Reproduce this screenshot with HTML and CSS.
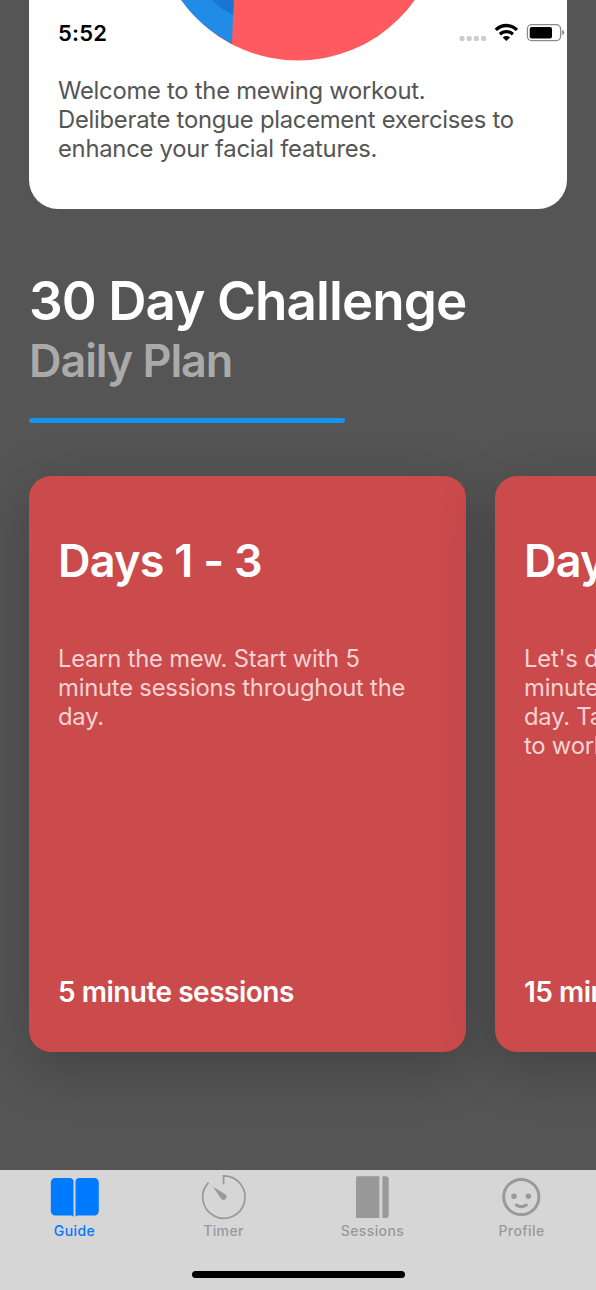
FILE: index.html
```html
<!DOCTYPE html>
<html lang="en">
<head>
<meta charset="utf-8">
<meta name="viewport" content="width=device-width">
<title>Guide</title>
<link rel="stylesheet" href="styles.css">
</head>
<body>
<div class="app">
  <header class="status">
    <span class="clock">5:52</span>
    <svg class="indicators" width="108" height="22" viewBox="0 0 108 22">
      <g fill="#ccc"><rect x="1.500" y="14" width="5" height="5" rx="1.700"/><rect x="8.700" y="14" width="5" height="5" rx="1.700"/><rect x="15.900" y="14" width="5" height="5" rx="1.700"/><rect x="23.100" y="14" width="5" height="5" rx="1.700"/></g>
      <g fill="none" stroke="#000" stroke-width="3.300"><path d="M37.800 7.900a15 15 0 0 1 21.200 0"/><path d="M41.900 12.200a9.300 9.300 0 0 1 13 0"/></g>
      <path d="M44.700 15.500a5.400 5.400 0 0 1 7.400 0L48.400 19z"/>
      <rect x="69.400" y="2.600" width="33.200" height="16" rx="4.300" fill="none" stroke="#8b8b8b" stroke-width="1.300"/>
      <rect x="71.700" y="4.900" width="22.300" height="11.500" rx="2"/>
      <path d="M104.300 8.100c2.400.7 2.400 4.300 0 5z" fill="#777"/>
    </svg>
  </header>
  <main class="content">
    <section class="intro">
      <svg class="art" width="288" height="62" viewBox="0 0 288 62">
        <circle cx="144" cy="-82.500" r="143" fill="#ff5a60"/>
        <path d="M27.200 0C41 19 58 33.500 78 44L79.700 0z" fill="#208ce8"/>
        <path d="M58 0Q67 9.500 79.200 15L79.700 0z" fill="#1776d2"/>
      </svg>
      <p class="copy intro-copy">Welcome to the mewing workout.<br>Deliberate tongue placement exercises to<br>enhance your facial features.</p>
    </section>
    <section class="heading">
      <h1 class="title">30 Day Challenge</h1>
      <h2 class="subtitle">Daily Plan</h2>
      <div class="rule"></div>
    </section>
    <section class="plans">
      <article class="plan">
        <h3 class="days">Days 1 - 3</h3>
        <p class="copy plan-copy">Learn the mew. Start with 5<br>minute sessions throughout the<br>day.</p>
        <p class="length">5 minute sessions</p>
      </article>
      <article class="plan">
        <h3 class="days">Days 4 - 6</h3>
        <p class="copy plan-copy">Let's do more. Start with 15<br>minute sessions throughout the<br>day. Take breaks if you need<br>to work up to it.</p>
        <p class="length">15 minute sessions</p>
      </article>
    </section>
  </main>
  <nav class="tabs">
    <a class="tab active">
      <svg class="icon" width="60" height="46" viewBox="0 0 60 46"><path fill="currentColor" d="M10.300 7H24.500a4 4 0 0 1 4 3V46q-.5-1.500-2-1.500H10.300a4.500 4.500 0 0 1-4.500-4.500V11.500A4.500 4.500 0 0 1 10.300 7zM34.500 7H49.300a4.500 4.500 0 0 1 4.500 4.500V40a4.500 4.500 0 0 1-4.500 4.500H32.500q-1.500 0-2 1.500V10a4 4 0 0 1 4-3z"/></svg>
      <span class="label">Guide</span>
    </a>
    <a class="tab">
      <svg class="icon" width="60" height="46" viewBox="0 0 60 46"><path fill="none" stroke="currentColor" stroke-width="1.700" d="M29.600 13.500V4.900a21.200 21.200 0 1 1-15.200 6.700"/><path fill="currentColor" d="M19 15.800L31.600 23.600a3 3 0 1 1-4.300 4.300z"/></svg>
      <span class="label">Timer</span>
    </a>
    <a class="tab">
      <svg class="icon" width="60" height="46" viewBox="0 0 60 46"><path fill="currentColor" d="M14.500 5.200H36.400V47H14.500a1.500 1.500 0 0 1-1.500-1.500V6.700A1.500 1.500 0 0 1 14.500 5.200zM39.400 5.200H42.700a3 3 0 0 1 3 3V44a3 3 0 0 1-3 3H39.400z"/></svg>
      <span class="label">Sessions</span>
    </a>
    <a class="tab">
      <svg class="icon" width="60" height="46" viewBox="0 0 60 46"><g fill="none" stroke="currentColor" stroke-width="3"><circle cx="29.300" cy="26" r="17.600"/><path stroke-linecap="round" d="M24.300 34q5 3.300 10 0"/></g><circle cx="22" cy="25.300" r="2.700" fill="currentColor"/><circle cx="36.400" cy="25.300" r="2.700" fill="currentColor"/></svg>
      <span class="label">Profile</span>
    </a>
    <div class="home"></div>
  </nav>
</div>
</body>
</html>
```
FILE: styles.css
```css
* { box-sizing: border-box; }
body, h1, h2, h3, p { margin: 0; }
body { background: #555; font-family: Inter, "Liberation Sans", sans-serif; }
.app { position: relative; display: flex; flex-direction: column; width: 596px; height: 1290px; overflow: hidden; background: #555; }
.status { position: absolute; top: 22px; left: 58px; right: 30px; display: flex; justify-content: space-between; z-index: 2; }
.clock { font-size: 22px; line-height: 22px; font-weight: 600; letter-spacing: .2px; color: #000; }
.content { flex: 1; min-height: 0; }
.intro { height: 209px; margin: 0 29px; background: #fff; border-radius: 0 0 29px 29px; }
.art { display: block; margin: 0 auto; }
.copy { font-size: 23.8px; line-height: 29.1px; letter-spacing: -.26px; white-space: nowrap; }
.intro-copy { padding: 14px 29px 0; color: #555; }
.heading { padding: 63px 29px 0; }
.title { font-size: 53px; line-height: 58px; font-weight: 600; letter-spacing: -.93px; color: #fff; white-space: nowrap; }
.subtitle { margin-top: 1px; font-size: 45px; line-height: 60px; font-weight: 600; letter-spacing: -1.1px; color: #aaa; }
.rule { width: 316px; height: 5px; margin-top: 27px; border-radius: 3px; background: #1494ee; }
.plans { display: flex; gap: 29px; margin-top: 53px; padding-left: 29px; }
.plan { flex: 0 0 437px; display: flex; flex-direction: column; height: 576px; padding: 56px 29px 44px; border-radius: 22px; background: #cb4a4c; box-shadow: 0 14px 56px rgba(0, 0, 0, .24); }
.days { font-size: 45px; line-height: 57px; font-weight: 600; letter-spacing: -.75px; color: #fff; }
.plan-copy { margin-top: 55px; letter-spacing: -.22px; color: #f5d3d3; }
.length { margin-top: auto; font-size: 28px; line-height: 32px; font-weight: 600; letter-spacing: -.5px; color: #fff; white-space: nowrap; }
.tabs { position: relative; z-index: 1; display: grid; grid-template-columns: repeat(4, 149px); height: 120px; padding-top: 1px; background: #d6d6d6; }
.tab { display: flex; flex-direction: column; align-items: center; color: #999; }
.tab.active { color: #007aff; }
.icon { overflow: visible; }
.label { margin-top: 5px; font-size: 14px; line-height: 18px; font-weight: 500; letter-spacing: .4px; }
.home { position: absolute; left: 191.5px; bottom: 12px; width: 213px; height: 7px; border-radius: 4px; background: #000; }
```
